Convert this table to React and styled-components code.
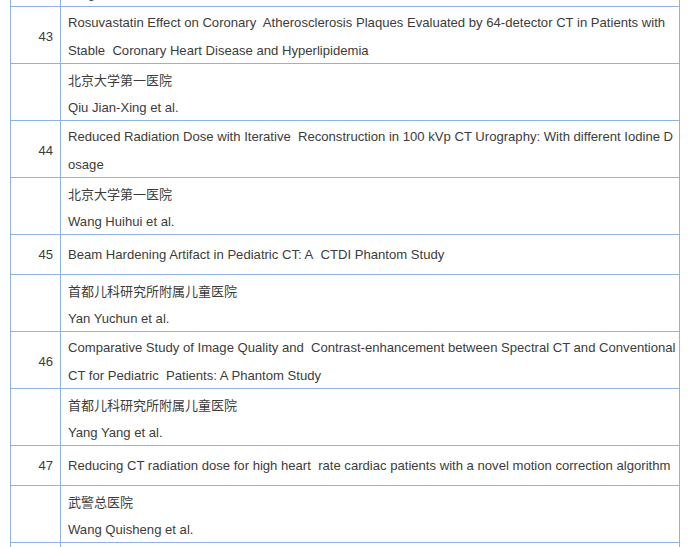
import styled, { createGlobalStyle } from 'styled-components';

const GlobalStyle = createGlobalStyle`
  html, body {
    margin: 0;
    padding: 0;
    background: #fff;
  }
  body {
    overflow: hidden;
    font-family: "Liberation Sans", Arial, "Noto Sans CJK SC", sans-serif;
  }
`

const Table = styled.div`
  display: grid;
  grid-template-columns: 50px 619px;
  width: 670px;
  margin: -50px 0 0 10px;
  border-left: 1px solid #8db3e2;
  box-sizing: border-box;
  color: #3c3c3c;
  font-size: 13.1px;
`
const Cell = styled.div`
  box-sizing: border-box;
  border-right: 1px solid #8db3e2;
  border-bottom: 1px solid #8db3e2;
  line-height: 28px;
  padding: ${props => props.$single ? '6px 7px 5px 7px' : '2px 7px 0 7px'};
  height: ${props => props.$single ? '40px' : '57px'};
  white-space: nowrap;
  overflow: visible;
`
const Num = styled(Cell)`
  display: flex;
  align-items: center;
  justify-content: flex-end;
  padding-top: ${props => props.$single ? '6px' : '3px'};
`
const Line = styled.div`
  height: 27.5px;
`
const Cn = styled.span`
  font-family: "Noto Sans CJK SC", sans-serif;
  font-size: 13px;
`

const rows = [
  { no: '', lines: ['', 'Ding Yi et al.'] },
  { no: '43', lines: ['Rosuvastatin Effect on Coronary\u00a0 Atherosclerosis Plaques Evaluated by 64-detector CT in Patients with', 'Stable\u00a0 Coronary Heart Disease and Hyperlipidemia'] },
  { no: '', cn: '北京大学第一医院', lines: ['Qiu Jian-Xing et al.'] },
  { no: '44', lines: ['Reduced Radiation Dose with Iterative\u00a0 Reconstruction in 100 kVp CT Urography: With different Iodine D', 'osage'] },
  { no: '', cn: '北京大学第一医院', lines: ['Wang Huihui et al.'] },
  { no: '45', single: true, lines: ['Beam Hardening Artifact in Pediatric CT: A\u00a0 CTDI Phantom Study'] },
  { no: '', cn: '首都儿科研究所附属儿童医院', lines: ['Yan Yuchun et al.'] },
  { no: '46', lines: ['Comparative Study of Image Quality and\u00a0 Contrast-enhancement between Spectral CT and Conventional', 'CT for Pediatric\u00a0 Patients: A Phantom Study'] },
  { no: '', cn: '首都儿科研究所附属儿童医院', lines: ['Yang Yang et al.'] },
  { no: '47', single: true, lines: ['Reducing CT radiation dose for high heart\u00a0 rate cardiac patients with a novel motion correction algorithm'] },
  { no: '', cn: '武警总医院', lines: ['Wang Quisheng et al.'] },
  { no: '', lines: ['', ''] },
]

const App = () => {
  return (
    <>
      <GlobalStyle />
      <Table>
        {rows.map((r, i) => [
          <Num key={`n${i}`} $single={r.single}>{r.no}</Num>,
          <Cell key={`t${i}`} $single={r.single}>
            {r.cn && <Line><Cn>{r.cn}</Cn></Line>}
            {r.lines.map((l, j) => <Line key={j}>{l}</Line>)}
          </Cell>
        ])}
      </Table>
    </>
  )
}

export default App;
